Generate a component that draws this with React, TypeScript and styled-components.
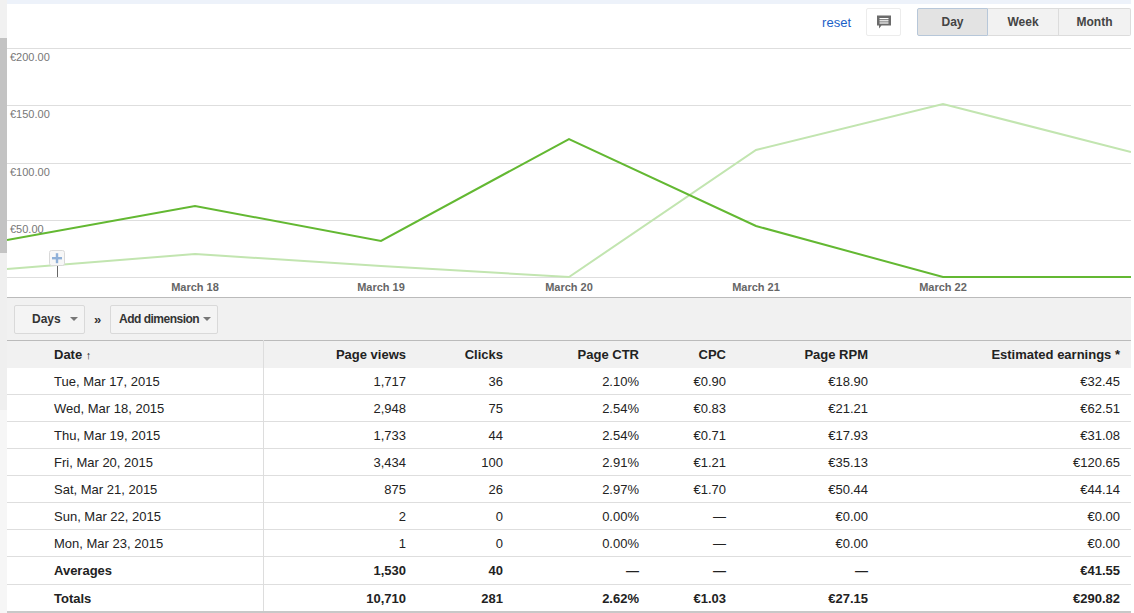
import styled, { createGlobalStyle } from 'styled-components';

const GlobalStyle = createGlobalStyle`
  html, body {
    margin: 0;
    padding: 0;
    background: #ffffff;
    font-family: 'Liberation Sans', Arial, sans-serif;
    color: #222;
  }
`;

type Row = {
  date: string;
  views: string;
  clicks: string;
  ctr: string;
  cpc: string;
  rpm: string;
  earnings: string;
};

const rows: Row[] = [
  { date: 'Tue, Mar 17, 2015', views: '1,717', clicks: '36', ctr: '2.10%', cpc: '€0.90', rpm: '€18.90', earnings: '€32.45' },
  { date: 'Wed, Mar 18, 2015', views: '2,948', clicks: '75', ctr: '2.54%', cpc: '€0.83', rpm: '€21.21', earnings: '€62.51' },
  { date: 'Thu, Mar 19, 2015', views: '1,733', clicks: '44', ctr: '2.54%', cpc: '€0.71', rpm: '€17.93', earnings: '€31.08' },
  { date: 'Fri, Mar 20, 2015', views: '3,434', clicks: '100', ctr: '2.91%', cpc: '€1.21', rpm: '€35.13', earnings: '€120.65' },
  { date: 'Sat, Mar 21, 2015', views: '875', clicks: '26', ctr: '2.97%', cpc: '€1.70', rpm: '€50.44', earnings: '€44.14' },
  { date: 'Sun, Mar 22, 2015', views: '2', clicks: '0', ctr: '0.00%', cpc: '—', rpm: '€0.00', earnings: '€0.00' },
  { date: 'Mon, Mar 23, 2015', views: '1', clicks: '0', ctr: '0.00%', cpc: '—', rpm: '€0.00', earnings: '€0.00' },
];

const summary: Row[] = [
  { date: 'Averages', views: '1,530', clicks: '40', ctr: '—', cpc: '—', rpm: '—', earnings: '€41.55' },
  { date: 'Totals', views: '10,710', clicks: '281', ctr: '2.62%', cpc: '€1.03', rpm: '€27.15', earnings: '€290.82' },
];

// chart geometry, in svg coords (chart box is 1124 x 249)
const dayX = [0, 188, 374, 562, 749, 936, 1124];
const earningsY = [192, 158, 193, 91, 178, 229, 229];
const compareY = [221, 206, 218, 229, 102, 56, 104];
const gridY = [0.5, 57.5, 115.5, 172.5, 229.5];
const axisLabels = ['€200.00', '€150.00', '€100.00', '€50.00'];
const dayLabels = ['March 18', 'March 19', 'March 20', 'March 21', 'March 22'];

const toPoints = (ys: number[]) => ys.map((y, i) => `${dayX[i]},${y}`).join(' ');

export default function App() {
  return (
    <>
      <GlobalStyle />
      <Page>
        <LeftRail>
          <RailPart $h={38} $bg="#f1f1f1" />
          <RailPart $h={215} $bg="#c3c3c3" />
          <RailPart $h={157} $bg="#efefef" />
          <RailPart $h={203} $bg="#f6f6f6" />
        </LeftRail>
        <Main>
          <TopBand />
          <Toolbar>
            <ResetLink href="#">reset</ResetLink>
            <IconButton>
              <svg width="16" height="16" viewBox="0 0 16 16">
                <path d="M1 1.5h14v10H5.5L3 14.5v-3H1z" fill="#6b6b6b" />
                <rect x="3.5" y="4" width="9" height="1.2" fill="#fff" />
                <rect x="3.5" y="6.2" width="9" height="1.2" fill="#fff" />
                <rect x="3.5" y="8.4" width="9" height="1.2" fill="#fff" />
              </svg>
            </IconButton>
            <Segmented>
              <SegButton $active>Day</SegButton>
              <SegButton>Week</SegButton>
              <SegButton>Month</SegButton>
            </Segmented>
          </Toolbar>
          <Chart>
            <svg width="1124" height="249" viewBox="0 0 1124 249">
              {gridY.map((y) => (
                <line key={y} x1="0" x2="1124" y1={y} y2={y} stroke="#dedede" strokeWidth="1" />
              ))}
              {axisLabels.map((label, i) => (
                <AxisText key={label} x="3" y={gridY[i] + 12}>
                  {label}
                </AxisText>
              ))}
              <polyline points={toPoints(compareY)} fill="none" stroke="#c2e5b0" strokeWidth="2" />
              <polyline points={toPoints(earningsY)} fill="none" stroke="#63b832" strokeWidth="2" />
              <line x1="50.5" x2="50.5" y1="218" y2="229" stroke="#666" strokeWidth="1" />
              <rect x="42.5" y="202.5" width="15" height="15" rx="2" fill="#f7f7f7" stroke="#d9d9d9" />
              <rect x="45" y="209" width="10" height="2.4" fill="#8fb0d8" />
              <rect x="48.8" y="205.2" width="2.4" height="10" fill="#8fb0d8" />
              {dayLabels.map((label, i) => (
                <DayText key={label} x={dayX[i + 1]} y="243" textAnchor="middle">
                  {label}
                </DayText>
              ))}
            </svg>
          </Chart>
          <FilterBar>
            <DropButton $w={71} $left={17}>
              Days
              <Caret />
            </DropButton>
            <Chevron>»</Chevron>
            <DropButton $w={108} $left={8}>
              <TightLabel>Add dimension</TightLabel>
              <Caret />
            </DropButton>
          </FilterBar>
          <Table>
            <colgroup>
              <col style={{ width: 256 }} />
              <col style={{ width: 151 }} />
              <col style={{ width: 97 }} />
              <col style={{ width: 136 }} />
              <col style={{ width: 87 }} />
              <col style={{ width: 142 }} />
              <col style={{ width: 255 }} />
            </colgroup>
            <thead>
              <tr>
                <HeadCell $first>
                  Date <SortArrow>↑</SortArrow>
                </HeadCell>
                <HeadCell>Page views</HeadCell>
                <HeadCell>Clicks</HeadCell>
                <HeadCell>Page CTR</HeadCell>
                <HeadCell>CPC</HeadCell>
                <HeadCell>Page RPM</HeadCell>
                <HeadCell $last>Estimated earnings *</HeadCell>
              </tr>
            </thead>
            <Body>
              {rows.map((r) => (
                <DataRow key={r.date} r={r} />
              ))}
              {summary.map((r, i) => (
                <DataRow key={r.date} r={r} bold tall={i === 0} />
              ))}
            </Body>
          </Table>
        </Main>
      </Page>
    </>
  );
}

function DataRow({ r, bold, tall }: { r: Row; bold?: boolean; tall?: boolean }) {
  return (
    <BodyRow $bold={bold} $tall={tall}>
      <Cell $first>{r.date}</Cell>
      <Cell>{r.views}</Cell>
      <Cell>{r.clicks}</Cell>
      <Cell>{r.ctr}</Cell>
      <Cell>{r.cpc}</Cell>
      <Cell>{r.rpm}</Cell>
      <Cell $last>{r.earnings}</Cell>
    </BodyRow>
  );
}

const Page = styled.div`
  display: flex;
  width: 1134px;
  height: 613px;
  overflow: hidden;
`;

const LeftRail = styled.div`
  display: flex;
  flex-direction: column;
  width: 7px;
  flex-shrink: 0;
`;

const RailPart = styled.div<{ $h: number; $bg: string }>`
  height: ${(p) => p.$h}px;
  background: ${(p) => p.$bg};
`;

const Main = styled.div`
  display: flex;
  flex-direction: column;
  width: 1124px;
  flex-shrink: 0;
`;

const TopBand = styled.div`
  height: 4px;
  background: #edf2fa;
`;

const Toolbar = styled.div`
  height: 44px;
  display: flex;
  align-items: flex-start;
  justify-content: flex-end;
  padding-top: 4px;
  box-sizing: border-box;
`;

const ResetLink = styled.a`
  color: #1a5fc7;
  text-decoration: none;
  font-size: 13px;
  margin-top: 7px;
  margin-right: 15px;
`;

const IconButton = styled.div`
  width: 35px;
  height: 28px;
  box-sizing: border-box;
  border: 1px solid #ececec;
  border-radius: 2px;
  background: #fff;
  display: flex;
  align-items: center;
  justify-content: center;
  margin-right: 16px;
`;

const Segmented = styled.div`
  display: flex;
`;

const SegButton = styled.div<{ $active?: boolean }>`
  width: 71px;
  height: 28px;
  box-sizing: border-box;
  display: flex;
  align-items: center;
  justify-content: center;
  font-size: 12px;
  font-weight: bold;
  color: #444;
  background: ${(p) => (p.$active ? '#e3e3e3' : '#f2f2f2')};
  border: 1px solid ${(p) => (p.$active ? '#b7c7d9' : '#dcdcdc')};
  border-left-width: ${(p) => (p.$active ? '1px' : '0')};
  &:first-child {
    border-radius: 2px 0 0 2px;
  }
  &:last-child {
    width: 72px;
    border-radius: 0 2px 2px 0;
  }
`;

const Chart = styled.div`
  height: 249px;
  svg {
    display: block;
  }
`;

const AxisText = styled.text`
  font-family: 'Liberation Sans', Arial, sans-serif;
  font-size: 11px;
  fill: #777;
`;

const DayText = styled.text`
  font-family: 'Liberation Sans', Arial, sans-serif;
  font-size: 11px;
  font-weight: bold;
  fill: #666;
`;

const FilterBar = styled.div`
  height: 43px;
  box-sizing: border-box;
  background: #f1f1f1;
  border-top: 1px solid #bbb;
  display: flex;
  align-items: center;
  padding: 0 0 0 7px;
`;

const DropButton = styled.div<{ $w: number; $left: number }>`
  width: ${(p) => p.$w}px;
  height: 29px;
  box-sizing: border-box;
  border: 1px solid #d9d9d9;
  border-radius: 2px;
  background: #f4f4f4;
  font-size: 12px;
  font-weight: bold;
  color: #333;
  white-space: nowrap;
  display: flex;
  align-items: center;
  justify-content: space-between;
  padding: 0 6px 0 ${(p) => p.$left}px;
`;

const TightLabel = styled.span`
  letter-spacing: -0.5px;
`;

const Caret = styled.span`
  width: 0;
  height: 0;
  flex-shrink: 0;
  border-left: 4px solid transparent;
  border-right: 4px solid transparent;
  border-top: 4px solid #777;
`;

const Chevron = styled.span`
  font-size: 13px;
  font-weight: bold;
  color: #333;
  width: 25px;
  text-align: center;
`;

const Table = styled.table`
  width: 1124px;
  border-collapse: collapse;
  table-layout: fixed;
  font-size: 13px;
  border-top: 1px solid #bbb;
  border-bottom: 2px solid #c8c8c8;
`;

const HeadCell = styled.th<{ $first?: boolean; $last?: boolean }>`
  height: 27px;
  padding: 0 ${(p) => (p.$last ? '11px' : '8px')} 0 ${(p) => (p.$first ? '47px' : '0')};
  background: #f1f1f1;
  font-weight: bold;
  color: #222;
  text-align: ${(p) => (p.$first ? 'left' : 'right')};
  border-right: ${(p) => (p.$first ? '1px solid #ddd' : 'none')};
  white-space: nowrap;
`;

const SortArrow = styled.span`
  font-size: 11px;
`;

const Body = styled.tbody`
  tr + tr td {
    border-top: 1px solid #dedede;
  }
`;

const BodyRow = styled.tr<{ $bold?: boolean; $tall?: boolean }>`
  font-weight: ${(p) => (p.$bold ? 'bold' : 'normal')};
  td {
    height: ${(p) => (p.$tall ? '27px' : '26px')};
  }
`;

const Cell = styled.td<{ $first?: boolean; $last?: boolean }>`
  padding: 0 ${(p) => (p.$last ? '11px' : '8px')} 0 ${(p) => (p.$first ? '47px' : '0')};
  text-align: ${(p) => (p.$first ? 'left' : 'right')};
  border-right: ${(p) => (p.$first ? '1px solid #ddd' : 'none')};
  color: #222;
  white-space: nowrap;
`;
